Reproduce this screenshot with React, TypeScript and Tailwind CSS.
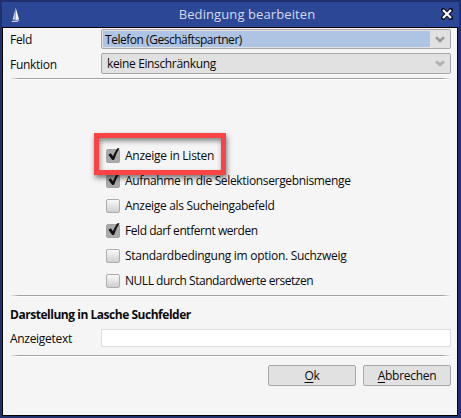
import React, { useState } from 'react';

type Option = { id: string; label: string; checked: boolean; tracking: string };

const initialOptions: Option[] = [
  { id: 'list', label: 'Anzeige in Listen', checked: true, tracking: 'tracking-[-0.26px]' },
  { id: 'selection', label: 'Aufnahme in die Selektionsergebnismenge', checked: true, tracking: 'tracking-[-0.34px]' },
  { id: 'search', label: 'Anzeige als Sucheingabefeld', checked: false, tracking: 'tracking-[-0.31px]' },
  { id: 'removable', label: 'Feld darf entfernt werden', checked: true, tracking: 'tracking-[-0.44px]' },
  { id: 'default', label: 'Standardbedingung im option. Suchzweig', checked: false, tracking: 'tracking-[-0.28px]' },
  { id: 'null', label: 'NULL durch Standardwerte ersetzen', checked: false, tracking: 'tracking-[-0.47px]' },
];

const Separator: React.FC = () => (
  <div className="ml-[7px] w-[441px] shrink-0 mask-r-from-98% mask-l-from-98%">
    <div className="h-px bg-[#a2a2a2]"></div>
    <div className="h-px bg-white"></div>
  </div>
);

const SailIcon: React.FC = () => (
  <svg className="h-4 w-[10px]" viewBox="0 0 10 16" fill="#fff">
    <path d="M4.6 0.5 L5.4 3 L8 12.4 L4.4 13 Z" />
    <path d="M3.9 3.5 L3.9 12.8 L1.6 12.4 Z" opacity="0.75" />
    <path d="M0.2 13.9 L8.6 13.2 L6.6 14.8 L1.4 15 Z" opacity="0.85" />
  </svg>
);

const Chevron: React.FC<{ color: string }> = ({ color }) => (
  <svg className="h-[7px] w-[10px]" viewBox="0 0 10 7" fill="none" stroke={color} strokeWidth="2.6">
    <path d="M1 1.2 L5 4.9 L9 1.2" />
  </svg>
);

const CheckBox: React.FC<{ checked: boolean }> = ({ checked }) => (
  <span
    className={`relative block size-[14px] shrink-0 rounded-[2px] border ${
      checked
        ? 'border-[#a4a4a4] bg-[#a9a9a9]'
        : 'border-[#acacac] bg-linear-to-b from-[#fafafa] to-[#cfcfcf]'
    }`}
  >
    {checked && (
      <svg className="absolute -top-[3px] left-0 h-4 w-[14px]" viewBox="0 0 14 16" fill="#111">
        <path d="M1.4 7.8 L3.8 6.3 L6 9.2 C7.2 6.2 8.8 3.2 10.4 1.2 L12.6 1.2 C10.4 4.4 8.6 8.4 7.2 12.8 L5.2 12.9 Z" />
      </svg>
    )}
  </span>
);

export default function App() {
  const [options, setOptions] = useState(initialOptions);

  const toggle = (id: string) => {
    setOptions(options.map(o => (o.id === id ? { ...o, checked: !o.checked } : o)));
  };

  return (
    <div className="h-[418px] w-[461px] border-2 border-[#1f306c] bg-[#1f306c] font-['Open_Sans','Noto_Sans',sans-serif] text-[12px] leading-4 text-[#0a0a0a] cursor-default select-none">
      <div className="flex h-[25px] items-center bg-[#2d4797] pr-[6px] pl-[9px]">
        <SailIcon />
        <h1 className="flex-1 pb-px pl-[32px] text-center text-[13px] font-normal leading-5 tracking-[0.1px] text-[#d3d9ea]">Bedingung bearbeiten</h1>
        <svg className="mb-px h-3 w-3" viewBox="0 0 12 12" fill="none">
          <path d="M2.2 2.2 L9.8 9.8 M9.8 2.2 L2.2 9.8" stroke="#0b0f1c" strokeWidth="4.4" strokeLinecap="square" />
          <path d="M2 2 L10 10 M10 2 L2 10" stroke="#fff" strokeWidth="2.2" />
        </svg>
      </div>

      <div className="flex h-[389px] w-[456px] flex-col border border-black bg-[#f5f5f5]">
        <div className="mt-px flex h-5 items-center pl-[7px]">
          <label className="w-[91px] pt-[2px] tracking-[-0.3px]">Feld</label>
          <div className="flex h-5 w-[350px] items-center rounded-[2px] border border-[#a8a8a8] bg-[#e1e1e1] pl-px">
            <span className="flex h-4 w-[327px] items-center bg-[#aec4e3] pt-px pl-[2px] tracking-[-0.47px]">Telefon (Geschäftspartner)</span>
            <span className="ml-[5px]"><Chevron color="#989898" /></span>
          </div>
        </div>
        <div className="mt-1 flex h-[21px] items-center pl-[7px]">
          <label className="w-[91px] pt-[2px] tracking-[-0.3px]">Funktion</label>
          <div className="flex h-[21px] w-[350px] items-center rounded-[2px] border border-[#a8a8a8] bg-[#e1e1e1] pl-[5px]">
            <span className="w-[323px] pt-px tracking-[-0.36px]">keine Einschränkung</span>
            <span className="ml-[5px]"><Chevron color="#b0b0b0" /></span>
          </div>
        </div>
        <div className="mt-1"><Separator /></div>

        <div className="relative mt-[63px] ml-[103px] flex h-[152px] flex-col">
          {options.map(o => (
            <button key={o.id} onClick={() => toggle(o.id)} className="flex h-[25px] items-center gap-[5px] text-left">
              <CheckBox checked={o.checked} />
              <span className={`pt-px whitespace-nowrap ${o.tracking}`}>{o.label}</span>
            </button>
          ))}
          {/* highlight around the first option */}
          <div className="pointer-events-none absolute -top-[10px] -left-[12px] h-[42px] w-[132px] border-[5px] border-[#f84444] shadow-[1px_3px_5px_rgba(0,0,0,0.5),inset_1px_3px_5px_rgba(0,0,0,0.45)]"></div>
        </div>

        <Separator />
        <h2 className="mt-[10px] pl-[7px] font-bold tracking-[-0.47px]">Darstellung in Lasche Suchfelder</h2>
        <div className="mt-[6px] flex h-[18px] items-center pl-[7px]">
          <label className="w-[91px] pt-[2px] tracking-[-0.3px]">Anzeigetext</label>
          <input className="h-[18px] w-[350px] border border-[#dedede] bg-white outline-none" />
        </div>
        <div className="mt-2"><Separator /></div>

        <div className="mt-2 flex justify-end gap-[7px] pr-[6px]">
          <button className="h-[21px] w-[88px] rounded-[2px] border border-[#a8a8a8] bg-[#e1e1e1] pt-px tracking-[-0.3px]">
            <span className="underline underline-offset-2">O</span>k
          </button>
          <button className="h-[21px] w-[88px] rounded-[2px] border border-[#a8a8a8] bg-[#e1e1e1] pt-px tracking-[-0.3px]">
            <span className="underline underline-offset-2">A</span>bbrechen
          </button>
        </div>
      </div>
    </div>
  );
}
